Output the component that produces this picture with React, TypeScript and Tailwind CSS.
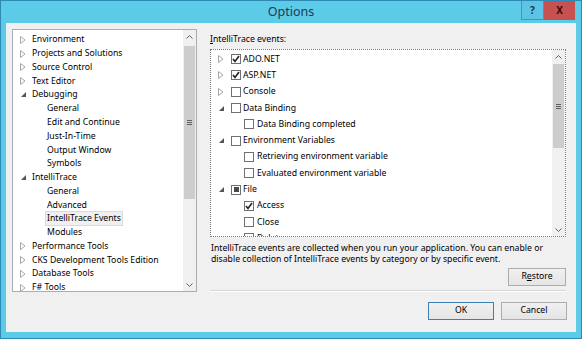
import type { ReactNode } from "react";

const font = { fontFamily: '"Segoe UI", "Noto Sans", sans-serif' };

type NavItem = { label: string; level: 0 | 1; state?: "open" | "closed"; selected?: boolean };

const navItems: NavItem[] = [
  { label: "Environment", level: 0, state: "closed" },
  { label: "Projects and Solutions", level: 0, state: "closed" },
  { label: "Source Control", level: 0, state: "closed" },
  { label: "Text Editor", level: 0, state: "closed" },
  { label: "Debugging", level: 0, state: "open" },
  { label: "General", level: 1 },
  { label: "Edit and Continue", level: 1 },
  { label: "Just-In-Time", level: 1 },
  { label: "Output Window", level: 1 },
  { label: "Symbols", level: 1 },
  { label: "IntelliTrace", level: 0, state: "open" },
  { label: "General", level: 1 },
  { label: "Advanced", level: 1 },
  { label: "IntelliTrace Events", level: 1, selected: true },
  { label: "Modules", level: 1 },
  { label: "Performance Tools", level: 0, state: "closed" },
  { label: "CKS Development Tools Edition", level: 0, state: "closed" },
  { label: "Database Tools", level: 0, state: "closed" },
  { label: "F# Tools", level: 0, state: "closed" },
];

type EventItem = {
  label: string;
  level: 0 | 1;
  state?: "open" | "closed";
  check: "on" | "off" | "some";
};

const eventItems: EventItem[] = [
  { label: "ADO.NET", level: 0, state: "closed", check: "on" },
  { label: "ASP.NET", level: 0, state: "closed", check: "on" },
  { label: "Console", level: 0, state: "closed", check: "off" },
  { label: "Data Binding", level: 0, state: "open", check: "off" },
  { label: "Data Binding completed", level: 1, check: "off" },
  { label: "Environment Variables", level: 0, state: "open", check: "off" },
  { label: "Retrieving environment variable", level: 1, check: "off" },
  { label: "Evaluated environment variable", level: 1, check: "off" },
  { label: "File", level: 0, state: "open", check: "some" },
  { label: "Access", level: 1, check: "on" },
  { label: "Close", level: 1, check: "off" },
  { label: "Delete", level: 1, check: "off" },
];

function Expander({ state }: { state?: "open" | "closed" }) {
  if (state === "closed")
    return (
      <svg width="6" height="8" viewBox="0 0 6 8">
        <path d="M0.5 0.5 L5 4 L0.5 7.5 Z" fill="none" stroke="#a6a6a6" strokeWidth="1" />
      </svg>
    );
  if (state === "open")
    return (
      <svg width="5" height="5" viewBox="0 0 5 5">
        <path d="M5 0 L5 5 L0 5 Z" fill="#555" />
      </svg>
    );
  return null;
}

function CheckBox({ check }: { check: "on" | "off" | "some" }) {
  return (
    <span className="flex h-[10px] w-[10px] items-center justify-center border border-[#707070] bg-white">
      {check === "on" && (
        <svg width="8" height="8" viewBox="0 0 8 8">
          <path d="M1 4 L3 6.5 L7 1" fill="none" stroke="#222" strokeWidth="1.6" />
        </svg>
      )}
      {check === "some" && <span className="h-[5px] w-[5px] bg-[#4a4a4a]" />}
    </span>
  );
}

function ScrollBar({ thumbTop, thumbHeight }: { thumbTop: number; thumbHeight: number }) {
  return (
    <div className="flex h-full w-[13px] flex-col bg-[#f0f0f0]">
      <div className="flex h-[13px] items-center justify-center">
        <svg width="7" height="4" viewBox="0 0 7 4">
          <path d="M0.5 3.5 L3.5 0.5 L6.5 3.5" fill="none" stroke="#606060" />
        </svg>
      </div>
      <div className="relative flex-1">
        <div
          className="absolute left-[1px] right-[1px] flex items-center justify-center bg-[#cdcdcd]"
          style={{ top: thumbTop, height: thumbHeight }}
        >
          <div className="flex flex-col gap-[1px]">
            <span className="h-px w-[5px] bg-[#606060]" />
            <span className="h-px w-[5px] bg-[#606060]" />
            <span className="h-px w-[5px] bg-[#606060]" />
          </div>
        </div>
      </div>
      <div className="flex h-[13px] items-center justify-center">
        <svg width="7" height="4" viewBox="0 0 7 4">
          <path d="M0.5 0.5 L3.5 3.5 L6.5 0.5" fill="none" stroke="#606060" />
        </svg>
      </div>
    </div>
  );
}

function Button({ children, primary, className = "" }: { children: ReactNode; primary?: boolean; className?: string }) {
  return (
    <div
      className={`flex h-[18px] items-center justify-center border bg-gradient-to-b from-[#f0f0f0] to-[#e5e5e5] text-[8.7px] text-black ${
        primary ? "border-[#3c7fb1]" : "border-[#acacac]"
      } ${className}`}
    >
      {children}
    </div>
  );
}

export default function App() {
  return (
    <div className="flex h-[339px] w-[582px] flex-col border border-[#2f89b5] bg-[#5ccbe8]" style={font}>
      {/* Title bar */}
      <div className="relative flex h-[22px] items-center justify-center">
        <span className="text-[12.5px] text-[#1b3a55]">Options</span>
        <div className="absolute right-[6px] top-0 flex">
          <div className="flex h-[19px] w-[23px] items-center justify-center border-x border-b border-[#3b99c2] bg-[#5fc4e4] text-[10px] font-bold text-[#173652]">
            ?
          </div>
          <div className="flex h-[19px] w-[31px] items-center justify-center bg-[#c75050] text-[10px] font-bold text-[#3a0d0d]">
            X
          </div>
        </div>
      </div>

      {/* Body */}
      <div className="mx-[5px] mb-[6px] flex flex-1 flex-col bg-[#f0f0f0] pl-[6px] pr-[9px] pt-[6px]">
        <div className="flex gap-[13px]">
          {/* Category tree */}
          <div className="flex h-[263px] w-[185px] border border-[#abadb3] bg-white">
            <div className="flex-1 overflow-hidden pt-[3px]">
              {navItems.map((item, i) => (
                <div key={i} className="flex h-[13.78px] items-center text-[8.7px] text-black">
                  {item.level === 0 ? (
                    <>
                      <span className="flex w-[19px] justify-end pr-[6px]">
                        <Expander state={item.state} />
                      </span>
                      <span>{item.label}</span>
                    </>
                  ) : (
                    <span
                      className={`ml-[32px] px-[1px] leading-[13px] ${
                        item.selected ? "border border-[#dadada] bg-[#f0f0f0]" : "border border-transparent"
                      }`}
                    >
                      {item.label}
                    </span>
                  )}
                </div>
              ))}
            </div>
            <ScrollBar thumbTop={3} thumbHeight={153} />
          </div>

          {/* Events panel */}
          <div className="flex w-[356px] flex-col">
            <div className="mt-[4px] h-[13px] text-[8.7px] leading-[13px] text-black">
              <span className="underline">I</span>ntelliTrace events:
            </div>
            <div className="mt-[3px] flex h-[188px] border border-dotted border-[#7a7a7a] bg-white">
              <div className="flex-1 overflow-hidden pt-[1px]">
                {eventItems.map((item, i) => (
                  <div key={i} className="flex h-[16.3px] items-center text-[8.7px] text-black">
                    {item.level === 0 ? (
                      <>
                        <span className="flex w-[20px] justify-center">
                          <Expander state={item.state} />
                        </span>
                        <CheckBox check={item.check} />
                        <span className="ml-[2px]">{item.label}</span>
                      </>
                    ) : (
                      <>
                        <span className="w-[33px]" />
                        <CheckBox check={item.check} />
                        <span className="ml-[3px]">{item.label}</span>
                      </>
                    )}
                  </div>
                ))}
              </div>
              <ScrollBar thumbTop={1} thumbHeight={84} />
            </div>
            <p className="mt-[6px] pl-[1px] text-[8.7px] leading-[10.5px] text-black">
              IntelliTrace events are collected when you run your application. You can enable or
              <br />
              disable collection of IntelliTrace events by category or by specific event.
            </p>
            <div className="mt-[4px] flex justify-end">
              <Button className="w-[58px]">
                R<span className="underline">e</span>store
              </Button>
            </div>
            <div className="mt-[4px] h-[2px] border-t border-[#d5d5d5] border-b-white border-b" />
          </div>
        </div>

        <div className="mt-[10px] flex justify-end gap-[7px]">
          <Button primary className="w-[66px]">
            OK
          </Button>
          <Button className="w-[66px]">Cancel</Button>
        </div>
      </div>
    </div>
  );
}
